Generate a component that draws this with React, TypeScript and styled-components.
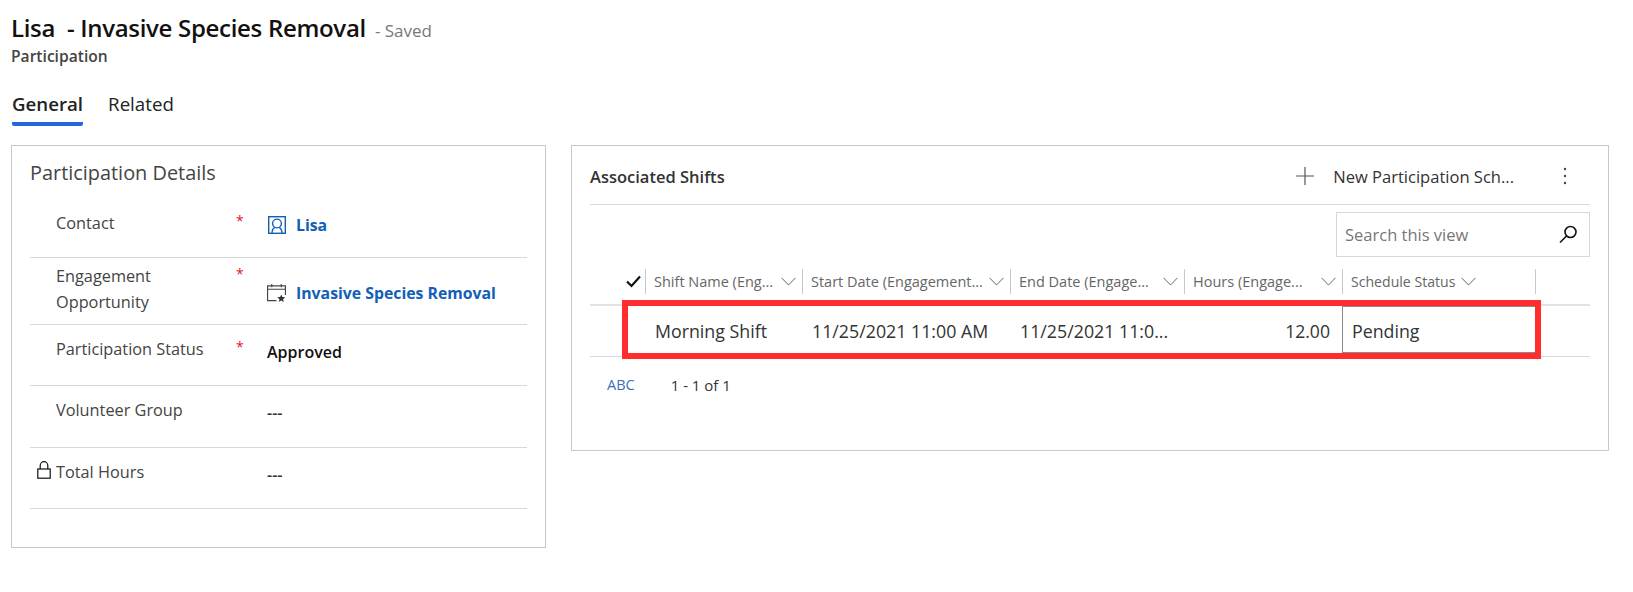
import React from 'react'
import styled, { createGlobalStyle } from 'styled-components'

const GlobalStyle = createGlobalStyle`
  html, body {
    margin: 0;
    padding: 0;
    background: #fff;
    font-family: "Open Sans", "Noto Sans", sans-serif;
  }
`

const RED = '#ff2d2d'

const ContactIcon = () => (
  <svg width="18" height="18" viewBox="0 0 18 18" fill="none" stroke="#1160b7" strokeWidth="1.4">
    <rect x="0.7" y="0.7" width="16.6" height="16.6" />
    <circle cx="9" cy="7.5" r="4.4" />
    <path d="M4 17.3c0-3.5 1.4-5.3 3-6M14 17.3c0-3.5-1.4-5.3-3-6" />
  </svg>
)

const CalendarIcon = () => (
  <svg width="20" height="20" viewBox="0 0 20 20" fill="none" stroke="#444" strokeWidth="1.2">
    <path d="M10 18H0.6V2.5h18.8V12" />
    <path d="M0.6 6h18.8M5 0.5v3.5M15 0.5v3.5" />
    <path d="M15 11.5l1.2 2.8 3 .3-2.3 2 .7 3-2.6-1.6-2.6 1.6.7-3-2.3-2 3-.3z" fill="#333" stroke="none" />
  </svg>
)

const LockIcon = () => (
  <svg width="14" height="18" viewBox="0 0 14 18" fill="none" stroke="#111" strokeWidth="1.2">
    <rect x="0.8" y="8" width="12.4" height="9.2" />
    <path d="M3.2 8V4.5a3.8 3.8 0 0 1 7.6 0V8" />
  </svg>
)

const Chevron = () => (
  <svg width="15" height="9" viewBox="0 0 15 9" fill="none" stroke="#666" strokeWidth="1">
    <path d="M0.5 0.8L7.5 8L14.5 0.8" />
  </svg>
)

const PlusIcon = () => (
  <svg width="20" height="20" viewBox="0 0 20 20" stroke="#555" strokeWidth="1.2">
    <path d="M10 1v18M1 10h18" />
  </svg>
)

const KebabIcon = () => (
  <svg width="4" height="18" viewBox="0 0 4 18" fill="#444">
    <circle cx="2" cy="2" r="1.2" />
    <circle cx="2" cy="9" r="1.2" />
    <circle cx="2" cy="16" r="1.2" />
  </svg>
)

const SearchIcon = () => (
  <svg width="19" height="19" viewBox="0 0 19 19" fill="none" stroke="#111" strokeWidth="1.6">
    <circle cx="11.5" cy="7" r="5.5" />
    <path d="M7.5 11L1 17.5" />
  </svg>
)

const CheckIcon = () => (
  <svg width="15" height="13" viewBox="0 0 15 13" fill="none" stroke="#111" strokeWidth="2.2">
    <path d="M1 6.5L5.5 11L14 1.5" />
  </svg>
)

const Page = styled.div`
  width: 1633px;
  height: 592px;
  box-sizing: border-box;
  padding: 11px 24px 0 11px;
  overflow: hidden;
`

const TitleLine = styled.div`
  display: flex;
  align-items: baseline;
  height: 34px;
`

const Title = styled.h1`
  margin: 0;
  font-size: 24px;
  line-height: 34px;
  font-weight: 600;
  color: #111;
  white-space: pre;
  letter-spacing: -0.31px;
`

const SavedText = styled.span`
  margin-left: 9px;
  font-size: 17px;
  color: #777;
`

const EntityName = styled.div`
  font-size: 15.6px;
  line-height: 22px;
  font-weight: 600;
  color: #444;
`

const TabBar = styled.div`
  display: flex;
  gap: 25px;
  margin: 21px 0 19px 1px;
`

const Tab = styled.div<{ $active?: boolean }>`
  height: 38px;
  box-sizing: border-box;
  padding-top: 3px;
  font-size: 18.7px;
  line-height: 26px;
  font-weight: ${({ $active }) => ($active ? 600 : 400)};
  color: #222;
  border-bottom: 4px solid ${({ $active }) => ($active ? '#2266e3' : 'transparent')};
  border-radius: 0 0 2px 2px;
`

const Panels = styled.div`
  display: flex;
  align-items: flex-start;
  gap: 25px;
`

const DetailsCard = styled.section`
  width: 535px;
  height: 403px;
  box-sizing: border-box;
  border: 1px solid #c8c8c8;
  padding: 14px 18px 0;
`

const CardTitle = styled.h2`
  margin: 0;
  font-size: 19.9px;
  line-height: 26px;
  font-weight: 400;
  color: #444;
  height: 40px;
`

const FieldRow = styled.div<{ $height: number; $top: number }>`
  display: grid;
  grid-template-columns: 26px 180px 31px 1fr;
  height: ${({ $height }) => $height}px;
  box-sizing: border-box;
  border-bottom: 1px solid #d8d8d8;
  padding-top: ${({ $top }) => $top}px;
`

const LockSlot = styled.div`
  padding: 2px 0 0 7px;
`

const FieldLabel = styled.div`
  font-size: 16.3px;
  line-height: 26px;
  color: #444;
`

const Required = styled.div`
  color: #e8112d;
  font-size: 14px;
  line-height: 22px;
`

const FieldValue = styled.div<{ $offset?: number }>`
  display: flex;
  align-items: center;
  gap: 10px;
  height: 30px;
  margin-top: ${({ $offset }) => $offset ?? 0}px;
  font-size: 16px;
  font-weight: 600;
  color: #111;
`

const PlainValue = styled(FieldValue)`
  color: #333;
`

const IconSlot = styled.span`
  display: flex;
  justify-content: center;
  width: 19px;
`

const LinkText = styled.span`
  color: #1160b7;
  font-size: 15.8px;
  font-weight: 700;
`

const ShiftsCard = styled.section`
  width: 1038px;
  height: 306px;
  box-sizing: border-box;
  border: 1px solid #c8c8c8;
  padding: 0 18px;
`

const ShiftsHeader = styled.div`
  display: flex;
  align-items: center;
  height: 56px;
  padding-top: 2px;
  border-bottom: 1px solid #d8d8d8;
`

const ShiftsTitle = styled.h2`
  margin: 0;
  flex: 1;
  font-size: 16.5px;
  font-weight: 600;
  color: #333;
`

const CommandButton = styled.div`
  display: flex;
  align-items: center;
  gap: 18px;
  font-size: 16.55px;
  color: #333;
  margin-right: 49px;
`

const MoreButton = styled.div`
  display: flex;
  margin-right: 23px;
`

const SearchRow = styled.div`
  display: flex;
  justify-content: flex-end;
  padding-top: 7px;
`

const SearchBox = styled.div`
  width: 254px;
  height: 45px;
  box-sizing: border-box;
  border: 1px solid #d8d8d8;
  display: flex;
  align-items: center;
  justify-content: space-between;
  padding: 0 11px 0 8px;
  font-size: 16.5px;
  color: #777;
`

const Grid = styled.div`
  position: relative;
  margin-top: 12px;
`

const columns = '32px 23px 157px 208px 174px 158px 194px 54px'

const HeaderRow = styled.div`
  display: grid;
  grid-template-columns: ${columns};
  height: 35px;
  border-bottom: 2px solid #e2e2e2;
`

const CheckCell = styled.div`
  grid-column: 2;
  display: flex;
  justify-content: center;
  align-items: center;
  height: 25px;
`

const HeaderCell = styled.div`
  display: flex;
  align-items: center;
  justify-content: space-between;
  height: 25px;
  box-sizing: border-box;
  border-left: 1px solid #c8c8c8;
  padding: 0 6px 0 8px;
  font-size: 14.5px;
  color: #666;
  white-space: nowrap;
`

const StatusHeaderCell = styled(HeaderCell)`
  justify-content: flex-start;
  gap: 6px;
  font-size: 14.1px;
  border-right: 1px solid #c8c8c8;
`

const DataRow = styled.div`
  display: grid;
  grid-template-columns: ${columns};
  height: 50px;
  border-bottom: 1px solid #d8d8d8;
  align-items: center;
`

const DataCell = styled.div<{ $right?: boolean }>`
  padding: ${({ $right }) => ($right ? '0 12px 0 10px' : '0 10px')};
  font-size: ${({ $right }) => ($right ? '17.6px' : '17.8px')};
  color: #333;
  white-space: nowrap;
  text-align: ${({ $right }) => ($right ? 'right' : 'left')};
`

const StatusCell = styled.div`
  grid-column: 7;
  align-self: start;
  height: 47px;
  box-sizing: border-box;
  border: 1px solid #8a8a8a;
  padding: 3px 9px 0;
  display: flex;
  align-items: center;
  font-size: 17.8px;
  color: #333;
`

const Highlight = styled.div`
  position: absolute;
  left: 32px;
  top: 31px;
  width: 919px;
  height: 59px;
  box-sizing: border-box;
  border: 6px solid ${RED};
  pointer-events: none;
`

const Footer = styled.div`
  display: flex;
  padding: 19px 0 0 17px;
  gap: 36px;
  font-size: 14.5px;
  line-height: 18px;
`

const JumpBar = styled.span`
  color: #3b6fb5;
`

const Paging = styled.span`
  font-size: 15px;
  color: #333;
`

const App: React.FC = () => {
  return (
    <Page>
      <GlobalStyle />
      <TitleLine>
        <Title>{'Lisa  - Invasive Species Removal'}</Title>
        <SavedText>- Saved</SavedText>
      </TitleLine>
      <EntityName>Participation</EntityName>
      <TabBar>
        <Tab $active>General</Tab>
        <Tab>Related</Tab>
      </TabBar>
      <Panels>
        <DetailsCard>
          <CardTitle>Participation Details</CardTitle>
          <FieldRow $height={58} $top={10}>
            <div />
            <FieldLabel>Contact</FieldLabel>
            <Required>*</Required>
            <FieldValue>
              <IconSlot>
                <ContactIcon />
              </IconSlot>
              <LinkText>Lisa</LinkText>
            </FieldValue>
          </FieldRow>
          <FieldRow $height={67} $top={5}>
            <div />
            <FieldLabel>Engagement Opportunity</FieldLabel>
            <Required>*</Required>
            <FieldValue $offset={15}>
              <IconSlot>
                <CalendarIcon />
              </IconSlot>
              <LinkText>Invasive Species Removal</LinkText>
            </FieldValue>
          </FieldRow>
          <FieldRow $height={61} $top={11}>
            <div />
            <FieldLabel>Participation Status</FieldLabel>
            <Required>*</Required>
            <FieldValue $offset={1}>Approved</FieldValue>
          </FieldRow>
          <FieldRow $height={62} $top={11}>
            <div />
            <FieldLabel>Volunteer Group</FieldLabel>
            <div />
            <PlainValue $offset={1}>---</PlainValue>
          </FieldRow>
          <FieldRow $height={61} $top={11}>
            <LockSlot>
              <LockIcon />
            </LockSlot>
            <FieldLabel>Total Hours</FieldLabel>
            <div />
            <PlainValue $offset={1}>---</PlainValue>
          </FieldRow>
        </DetailsCard>
        <ShiftsCard>
          <ShiftsHeader>
            <ShiftsTitle>Associated Shifts</ShiftsTitle>
            <CommandButton>
              <PlusIcon />
              New Participation Sch...
            </CommandButton>
            <MoreButton>
              <KebabIcon />
            </MoreButton>
          </ShiftsHeader>
          <SearchRow>
            <SearchBox>
              Search this view
              <SearchIcon />
            </SearchBox>
          </SearchRow>
          <Grid>
            <HeaderRow>
              <CheckCell>
                <CheckIcon />
              </CheckCell>
              <HeaderCell>
                Shift Name (Eng...
                <Chevron />
              </HeaderCell>
              <HeaderCell>
                Start Date (Engagement...
                <Chevron />
              </HeaderCell>
              <HeaderCell>
                End Date (Engage...
                <Chevron />
              </HeaderCell>
              <HeaderCell>
                Hours (Engage...
                <Chevron />
              </HeaderCell>
              <StatusHeaderCell>
                Schedule Status
                <Chevron />
              </StatusHeaderCell>
            </HeaderRow>
            <DataRow>
              <div />
              <div />
              <DataCell>Morning Shift</DataCell>
              <DataCell>11/25/2021 11:00 AM</DataCell>
              <DataCell>11/25/2021 11:0...</DataCell>
              <DataCell $right>12.00</DataCell>
              <StatusCell>Pending</StatusCell>
            </DataRow>
            <Highlight />
          </Grid>
          <Footer>
            <JumpBar>ABC</JumpBar>
            <Paging>1 - 1 of 1</Paging>
          </Footer>
        </ShiftsCard>
      </Panels>
    </Page>
  )
}

export default App
